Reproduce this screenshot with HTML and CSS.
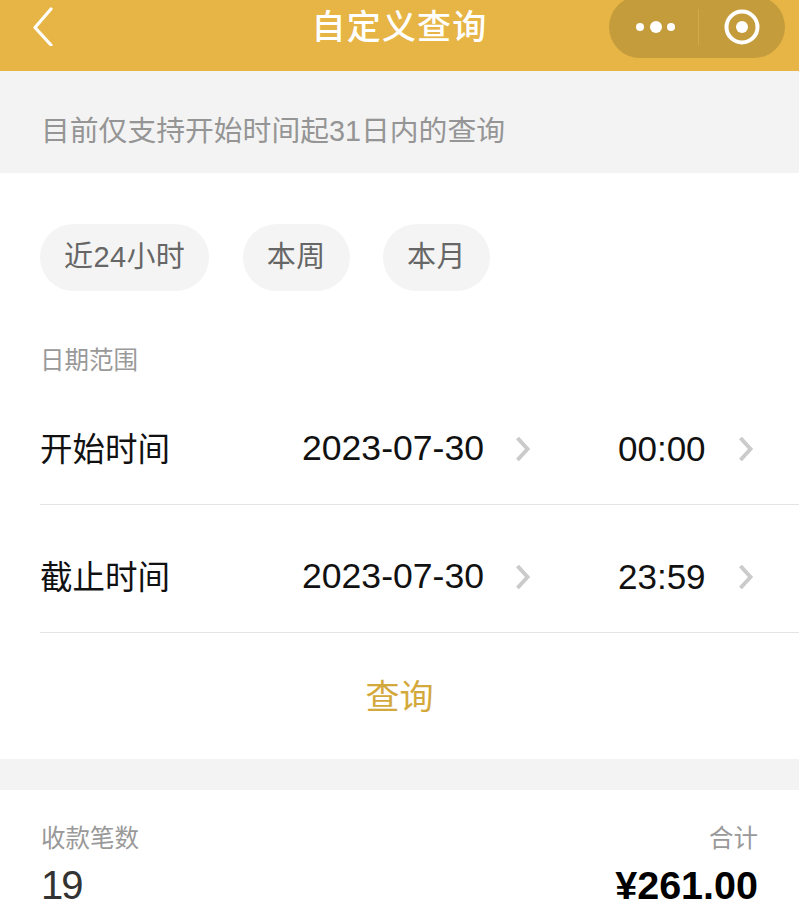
FILE: index.html
```html
<!DOCTYPE html>
<html lang="zh-CN">
<head>
<meta charset="utf-8">
<title>自定义查询</title>
<link rel="stylesheet" href="styles.css">
</head>
<body>
<header class="nav">
  <div class="nav-left">
    <svg class="back" width="24" height="40" viewBox="0 0 24 40"><path d="M20 3 L4 21.500 L20 39" fill="none" stroke="#fff" stroke-width="3.200" stroke-linecap="round" stroke-linejoin="round"/></svg>
  </div>
  <h1 class="nav-title">自定义查询</h1>
  <div class="capsule">
    <svg class="capsule-more" width="40" height="16" viewBox="0 0 40 16"><circle cx="4" cy="8" r="4" fill="#fff"/><circle cx="20" cy="8" r="6" fill="#fff"/><circle cx="35" cy="8" r="4" fill="#fff"/></svg>
    <span class="capsule-line"></span>
    <svg class="capsule-close" width="36" height="36" viewBox="0 0 36 36"><circle cx="18" cy="18" r="15.500" fill="none" stroke="#fff" stroke-width="4"/><circle cx="18" cy="18" r="6" fill="#fff"/></svg>
  </div>
</header>
<p class="notice">目前仅支持开始时间起31日内的查询</p>
<section class="panel">
  <div class="chips">
    <span class="chip">近24小时</span>
    <span class="chip">本周</span>
    <span class="chip">本月</span>
  </div>
  <div class="range-label">日期范围</div>
  <div class="row">
    <span class="row-name">开始时间</span>
    <span class="row-date">2023-07-30</span>
    <svg class="chev chev-date" width="16" height="26" viewBox="0 0 16 26"><path d="M2.500 2 L12.500 13 L2.500 24" fill="none" stroke="#cbcbcb" stroke-width="4"/></svg>
    <span class="row-time">00:00</span>
    <svg class="chev" width="16" height="26" viewBox="0 0 16 26"><path d="M2.500 2 L12.500 13 L2.500 24" fill="none" stroke="#cbcbcb" stroke-width="4"/></svg>
  </div>
  <div class="row">
    <span class="row-name">截止时间</span>
    <span class="row-date">2023-07-30</span>
    <svg class="chev chev-date" width="16" height="26" viewBox="0 0 16 26"><path d="M2.500 2 L12.500 13 L2.500 24" fill="none" stroke="#cbcbcb" stroke-width="4"/></svg>
    <span class="row-time">23:59</span>
    <svg class="chev" width="16" height="26" viewBox="0 0 16 26"><path d="M2.500 2 L12.500 13 L2.500 24" fill="none" stroke="#cbcbcb" stroke-width="4"/></svg>
  </div>
  <div class="query">查询</div>
</section>
<section class="summary">
  <div class="stat">
    <span class="stat-label">收款笔数</span>
    <span class="stat-count">19</span>
  </div>
  <div class="stat stat-right">
    <span class="stat-label">合计</span>
    <span class="stat-total">¥261.00</span>
  </div>
</section>
</body>
</html>
```
FILE: styles.css
```css
* { box-sizing: border-box; margin: 0; padding: 0; }
html, body { height: 901px; overflow: hidden; }
body {
  background: #f3f3f3;
  font-family: "Liberation Sans", "Noto Sans CJK SC", sans-serif;
  color: #111;
}
.nav {
  height: 71px;
  background: #e6b545;
  display: grid;
  grid-template-columns: 1fr auto 1fr;
  align-items: start;
}
.nav-left { padding: 6px 0 0 31px; height: 54px; }
.back { display: block; }
.nav-title {
  font-size: 34px;
  font-weight: 500;
  color: #fff;
  line-height: 54px;
  letter-spacing: 1.200px;
}
.capsule {
  justify-self: end;
  margin: -4px 14px 0 0;
  width: 176px;
  height: 62px;
  border-radius: 31px;
  background: #c49c3c;
  display: flex;
  align-items: center;
}
.capsule-more { margin-left: 27px; }
.capsule-line { width: 1px; height: 36px; margin-left: 22px; background: #d2aa4c; }
.capsule-close { margin-left: 25px; }
.notice {
  height: 102px;
  padding-left: 41px;
  font-size: 28.800px;
  line-height: 120px;
  color: #959595;
  overflow: hidden;
}
.panel {
  height: 586px;
  background: #fff;
  padding: 51px 0 0 40px;
}
.chips { display: flex; gap: 33.500px; }
.chip {
  height: 67px;
  padding: 0 24px;
  border-radius: 34px;
  background: #f4f4f4;
  font-size: 29px;
  letter-spacing: 0.400px;
  line-height: 67px;
  color: #666;
}
.range-label {
  margin-top: 54px;
  font-size: 24.500px;
  line-height: 32px;
  color: #999;
}
.row {
  height: 128px;
  padding-top: 16px;
  display: flex;
  align-items: center;
  border-bottom: 1px solid #e4e4e4;
  color: #111;
}
.row-name { width: 262px; padding-bottom: 4px; font-size: 32.500px; }
.row-date { width: 213px; font-size: 35.600px; }
.chev-date { margin-right: 87px; }
.row-time { width: 120px; font-size: 35px; }
.query {
  height: 126px;
  margin-left: -40px;
  text-align: center;
  font-size: 34px;
  line-height: 128px;
  color: #d4a93c;
}
.summary {
  margin-top: 31px;
  height: 111px;
  background: #fff;
  padding: 33px 41px 0;
  display: flex;
  justify-content: space-between;
}
.stat { display: flex; flex-direction: column; }
.stat-right { align-items: flex-end; }
.stat-label { font-size: 24.500px; line-height: 32px; color: #999; }
.stat-count { margin-top: 14px; font-size: 40px; letter-spacing: -2px; line-height: 32px; color: #333; }
.stat-total { margin-top: 14px; font-size: 39.500px; line-height: 32px; font-weight: 700; color: #000; }
```
